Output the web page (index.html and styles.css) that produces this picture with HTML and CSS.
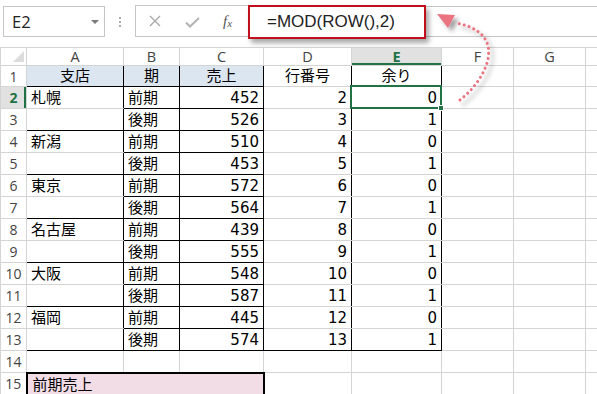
FILE: index.html
```html
<!DOCTYPE html>
<html lang="ja">
<head>
<meta charset="utf-8">
<title>MOD ROW</title>
<link rel="stylesheet" href="styles.css">
</head>
<body>
<div class="app">
  <div class="bar">
    <div class="namebox"><span class="ref">E2</span><span class="dd"></span></div>
    <div class="grip"><i></i><i></i><i></i></div>
    <div class="fxbox">
      <svg class="ic" width="12" height="12" viewBox="0 0 12 12"><path d="M1 1L11 11M11 1L1 11" stroke="#a6a6a6" stroke-width="1.3" fill="none"/></svg>
      <svg class="ic ok" width="15" height="11" viewBox="0 0 15 11"><path d="M1 5.5L5 9.5L14 1" stroke="#b3b3b3" stroke-width="2" fill="none"/></svg>
      <span class="fx">f<sub>x</sub></span>
    </div>
    <div class="formula"><div class="hl">=MOD(ROW(),2)</div></div>
  </div>

  <table class="sheet">
    <colgroup>
      <col class="c0"><col class="cA"><col class="cB"><col class="cC"><col class="cD"><col class="cE"><col class="cF"><col class="cG"><col class="cH">
    </colgroup>
    <tr class="hr">
      <td class="corner"><span class="tri"></span></td><td class="hd">A</td><td class="hd">B</td><td class="hd">C</td><td class="hd">D</td><td class="hd on">E</td><td class="hd">F</td><td class="hd">G</td><td class="hd"></td>
    </tr>
    <tr class="r1">
      <td class="rh">1</td><td class="bl ctr br bb">支店</td><td class="bl ctr br bb">期</td><td class="bl ctr br bb">売上</td><td class="ctr br">行番号</td><td class="ctr br bb">余り</td><td></td><td></td><td></td>
    </tr>
    <tr>
      <td class="rh on">2</td><td class="br">札幌</td><td class="br bb">前期</td><td class="num br bb">452</td><td class="num br">2</td><td class="num br sc"><span class="sel"><span class="handle"></span></span>0</td><td></td><td></td><td></td>
    </tr>
    <tr>
      <td class="rh">3</td><td class="br bb"></td><td class="br bb">後期</td><td class="num br bb">526</td><td class="num br">3</td><td class="num br">1</td><td></td><td></td><td></td>
    </tr>
    <tr>
      <td class="rh">4</td><td class="br">新潟</td><td class="br bb">前期</td><td class="num br bb">510</td><td class="num br">4</td><td class="num br">0</td><td></td><td></td><td></td>
    </tr>
    <tr>
      <td class="rh">5</td><td class="br bb"></td><td class="br bb">後期</td><td class="num br bb">453</td><td class="num br">5</td><td class="num br">1</td><td></td><td></td><td></td>
    </tr>
    <tr>
      <td class="rh">6</td><td class="br">東京</td><td class="br bb">前期</td><td class="num br bb">572</td><td class="num br">6</td><td class="num br">0</td><td></td><td></td><td></td>
    </tr>
    <tr>
      <td class="rh">7</td><td class="br bb"></td><td class="br bb">後期</td><td class="num br bb">564</td><td class="num br">7</td><td class="num br">1</td><td></td><td></td><td></td>
    </tr>
    <tr>
      <td class="rh">8</td><td class="br">名古屋</td><td class="br bb">前期</td><td class="num br bb">439</td><td class="num br">8</td><td class="num br">0</td><td></td><td></td><td></td>
    </tr>
    <tr>
      <td class="rh">9</td><td class="br bb"></td><td class="br bb">後期</td><td class="num br bb">555</td><td class="num br">9</td><td class="num br">1</td><td></td><td></td><td></td>
    </tr>
    <tr>
      <td class="rh">10</td><td class="br">大阪</td><td class="br bb">前期</td><td class="num br bb">548</td><td class="num br">10</td><td class="num br">0</td><td></td><td></td><td></td>
    </tr>
    <tr>
      <td class="rh">11</td><td class="br bb"></td><td class="br bb">後期</td><td class="num br bb">587</td><td class="num br">11</td><td class="num br">1</td><td></td><td></td><td></td>
    </tr>
    <tr>
      <td class="rh">12</td><td class="br">福岡</td><td class="br bb">前期</td><td class="num br bb">445</td><td class="num br">12</td><td class="num br">0</td><td></td><td></td><td></td>
    </tr>
    <tr>
      <td class="rh">13</td><td class="br bb"></td><td class="br bb">後期</td><td class="num br bb">574</td><td class="num br bb">13</td><td class="num br bb">1</td><td></td><td></td><td></td>
    </tr>
    <tr>
      <td class="rh">14</td><td></td><td></td><td></td><td></td><td></td><td></td><td></td><td></td>
    </tr>
    <tr class="r15">
      <td class="rh">15</td><td class="pk" colspan="3">前期売上</td><td></td><td></td><td></td><td></td><td></td>
    </tr>
  </table>

  <svg class="arrow" width="597" height="394" viewBox="0 0 597 394">
    <defs>
      <filter id="sh" x="-20%" y="-20%" width="160%" height="160%">
        <feDropShadow dx="4" dy="4" stdDeviation="2" flood-color="#000" flood-opacity="0.35"/>
      </filter>
    </defs>
    <g filter="url(#sh)">
      <path d="M460 100 C478 86 492 63 488 46 C485 33 472 26 456 23" fill="none" stroke="#ea7480" stroke-width="3" stroke-linecap="round" stroke-dasharray="0.1 5"/>
      <polygon points="437,14 455,15 448,28" fill="#ea7480"/>
    </g>
  </svg>
</div>
</body>
</html>
```

FILE: styles.css
```css
* { box-sizing: border-box; }
html, body { margin: 0; padding: 0; background: #fff; overflow: hidden; }
body { width: 597px; height: 394px; font-family: "DejaVu Sans", "Noto Sans CJK JP", sans-serif; color: #000; }
.app { position: relative; width: 597px; height: 394px; overflow: hidden; }

/* formula bar */
.bar { display: flex; align-items: flex-start; height: 47px; padding-top: 6px; }
.namebox {
  margin-left: 3px; width: 102px; height: 31px;
  border: 1px solid #c6c6c6;
  display: flex; align-items: center; justify-content: space-between;
  padding: 0 5px 0 8px;
}
.ref { font: 16.5px "Open Sans", sans-serif; color: #222; }
.dd { width: 0; height: 0; border-left: 4px solid transparent; border-right: 4px solid transparent; border-top: 4px solid #7a7a7a; margin-top: 1px; }
.grip { width: 30px; height: 31px; display: flex; flex-direction: column; align-items: center; justify-content: center; gap: 2px; }
.grip i { display: block; width: 2px; height: 2px; background: #a9a9a9; }
.fxbox {
  width: 113px; height: 32px; margin-top: -1px;
  border: 1px solid #c6c6c6; border-right: none;
  display: flex; align-items: center; padding-left: 13px;
}
.fxbox .ic { display: block; }
.fxbox .ic.ok { margin-left: 24px; margin-top: 2px; }
.fx { margin-left: 23px; font: italic 15px "Liberation Serif", serif; color: #555; }
.fx sub { font-size: 11px; vertical-align: -1px; }
.formula {
  flex: 1; height: 31px;
  border-top: 1px solid #c6c6c6; border-bottom: 1px solid #c6c6c6;
}
.hl {
  margin-top: -2px; margin-left: 0; width: 178px; height: 34px;
  border: 2px solid #c0101c;
  box-shadow: 3px 4px 5px rgba(0,0,0,0.35);
  background: #fff;
  font: 17px "Liberation Sans", sans-serif; color: #222;
  padding-left: 17px; line-height: 29px;
}

/* sheet */
.sheet { border-collapse: collapse; table-layout: fixed; width: 597px; }
.c0 { width: 26px; } .cA { width: 97px; } .cB { width: 56px; } .cC { width: 84px; }
.cD { width: 88px; } .cE { width: 90px; } .cF { width: 72px; } .cG { width: 72px; } .cH { width: 12px; }
.sheet td {
  border: 1px solid #d4d4d4; padding: 0 4px; height: 22px;
  font-size: 15px; line-height: 20px; white-space: nowrap; overflow: visible;
  vertical-align: bottom;
}
.sheet tr.hr td { height: 18px; font: 14.5px "Open Sans", sans-serif; color: #444; text-align: center; line-height: 16px; vertical-align: middle; padding: 0; }
.sheet tr.r1 td { height: 21px; }
.sheet tr.r15 td { height: 28px; vertical-align: top; line-height: 20px; }
.sheet td.rh { font: 14px "Open Sans", sans-serif; color: #444; text-align: center; padding: 0; vertical-align: middle; }
.sheet tr.r15 td.rh { vertical-align: top; line-height: 22px; }
.sheet td.rh.on { background: #e1e1e1; color: #217346; font-weight: bold; box-shadow: inset -2px 0 0 #217346; }
.sheet tr.hr td.on { background: #e1e1e1; color: #217346; font-weight: bold; box-shadow: inset 0 -2px 0 #217346; }
.corner { position: relative; }
.tri { position: absolute; right: 2px; bottom: 3px; width: 0; height: 0; border-left: 11px solid transparent; border-bottom: 11px solid #dcdcdc; }

.ctr { text-align: center; }
.num { text-align: right; }
.sheet td.bl { background: #dce6f1; }
.sheet td.br { border-right-color: #000; }
.sheet td.bb { border-bottom-color: #000; }
.sheet td.pk { background: #f2dce6; border: 2px solid #000; padding-left: 5px; padding-top: 1px; }

.sc { position: relative; }
.sel { position: absolute; left: -2px; top: -2px; right: -1px; bottom: -1px; border: 2px solid #217346; }
.handle { position: absolute; right: -4px; bottom: -4px; width: 6px; height: 6px; background: #217346; border: 1px solid #fff; }

.arrow { position: absolute; left: 0; top: 0; pointer-events: none; }
```
